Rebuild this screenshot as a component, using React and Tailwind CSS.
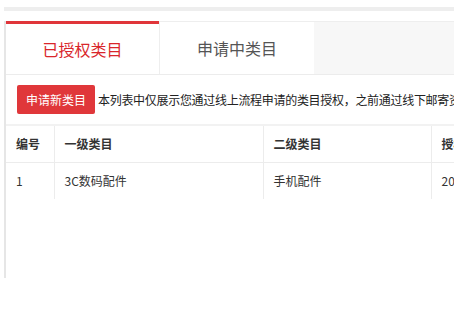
const columns = [
    { key: "id",     label: "编号",     width: "w-[48px]" },
    { key: "first",  label: "一级类目", width: "w-[209px]" },
    { key: "second", label: "二级类目", width: "w-[168px]" },
    { key: "date",   label: "授权时间", width: "w-[160px]" },
];

const rows = [
    { id: "1", first: "3C数码配件", second: "手机配件", date: "2017-05-12 10:23:45" },
];

function Tabs() {
    return (
        <div className="flex h-[54px] bg-[#f7f7f7] border-t border-[#eeeeee] border-b border-b-[#ececec]">
            <div className="w-[153px] bg-white border-t-[3px] border-[#e0353a] -mt-px flex items-center justify-center text-[16px] text-[#d9262b]">
                已授权类目
            </div>
            <div className="w-[155px] bg-white border-l border-[#eeeeee] flex items-center justify-center text-[16px] text-[#555555]">
                申请中类目
            </div>
        </div>
    );
}

function CategoryTable() {
    return (
        <table className="table-fixed border-collapse mt-[10px] text-[12px] text-[#333333]">
            <thead>
                <tr className="h-[37px] border-t-2 border-[#f2f2f2] border-b border-b-[#ececec]">
                    {columns.map((c, i) => (
                        <th
                            key={c.key}
                            className={`${c.width} px-[10px] text-left font-bold whitespace-nowrap ${i > 0 ? "border-l border-[#ececec]" : ""}`}
                        >
                            {c.label}
                        </th>
                    ))}
                </tr>
            </thead>
            <tbody>
                {rows.map((r) => (
                    <tr key={r.id} className="h-[37px]">
                        {columns.map((c, i) => (
                            <td
                                key={c.key}
                                className={`px-[10px] whitespace-nowrap ${i > 0 ? "border-l border-[#ececec]" : ""}`}
                            >
                                {r[c.key]}
                            </td>
                        ))}
                    </tr>
                ))}
            </tbody>
        </table>
    );
}

export default function App() {
    return (
        <div
            className="w-[454px] h-[335px] overflow-hidden bg-white pt-[7px]"
            style={{ fontFamily: '"Noto Sans CJK SC", "Noto Sans", sans-serif' }}
        >
            <div className="ml-[4px] h-[4px] bg-[#eeeeee]" />
            <div className="ml-[4px] mt-[10px] h-[257px] w-[700px] border-l-2 border-[#e6e6e6] bg-white">
                <Tabs />
                <div className="flex items-center mt-[10px] pl-[11px]">
                    <button className="h-[29px] w-[78px] shrink-0 rounded-[2px] bg-[#e0373a] text-white text-[12px]">
                        申请新类目
                    </button>
                    <span className="ml-[3px] text-[12px] tracking-[-0.3px] text-[#222222] whitespace-nowrap">
                        本列表中仅展示您通过线上流程申请的类目授权，之前通过线下邮寄资质申请的类目授权请在类目管理中查看
                    </span>
                </div>
                <CategoryTable />
            </div>
        </div>
    );
}
